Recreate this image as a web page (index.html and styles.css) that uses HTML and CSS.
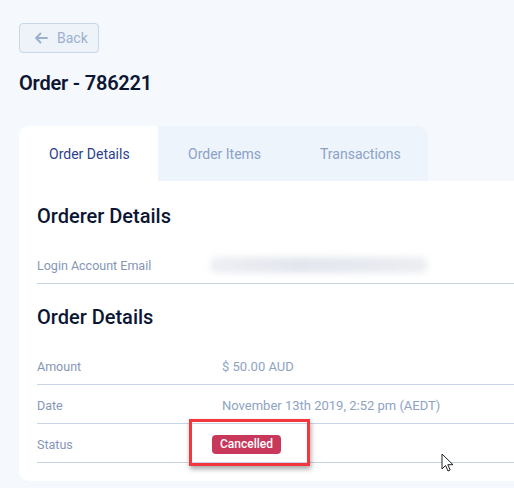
FILE: index.html
```html
<!DOCTYPE html>
<html>
<head>
<meta charset="utf-8">
<link rel="stylesheet" href="styles.css">
</head>
<body>
<div class="page">
  <button class="back-btn">
    <svg class="back-arrow" width="14" height="12" viewBox="0 0 14 12"><path d="M13 6H2M6.5 1.5L2 6l4.5 4.5" fill="none" stroke="currentColor" stroke-width="1.8" stroke-linecap="round" stroke-linejoin="round"/></svg>
    <span>Back</span>
  </button>
  <h1 class="title">Order - 786221</h1>
  <div class="card">
    <div class="tabs">
      <div class="tab active">Order Details</div>
      <div class="tab-group">
        <div class="tab">Order Items</div>
        <div class="tab">Transactions</div>
      </div>
    </div>
    <div class="card-body">
      <h2 class="section-title">Orderer Details</h2>
      <div class="row">
        <div class="label">Login Account Email</div>
        <div class="value"><div class="blur"></div></div>
      </div>
      <h2 class="section-title second">Order Details</h2>
      <div class="row">
        <div class="label">Amount</div>
        <div class="value">$ 50.00 AUD</div>
      </div>
      <div class="row">
        <div class="label">Date</div>
        <div class="value">November 13th 2019, 2:52 pm (AEDT)</div>
      </div>
      <div class="row status-row">
        <div class="label">Status</div>
        <div class="value"><span class="badge">Cancelled</span></div>
        <div class="highlight"></div>
        <svg class="cursor" width="14" height="20" viewBox="0 0 14 20"><path d="M1 1v15l3.5-3.5 2.5 5.5 2.2-1-2.4-5.3H12z" fill="#fff" stroke="#222" stroke-width="1" stroke-linejoin="round"/></svg>
      </div>
    </div>
  </div>
</div>
</body>
</html>
```
FILE: styles.css
```css
html, body {
  margin: 0;
  padding: 0;
  background: #f5f8fc;
  overflow: hidden;
}
body {
  font-family: Roboto, "Liberation Sans", sans-serif;
  width: 514px;
  height: 488px;
}
.page {
  padding: 23px 0 0 19px;
}
.back-btn {
  display: flex;
  align-items: center;
  gap: 9px;
  box-sizing: border-box;
  width: 80px;
  height: 30px;
  padding: 0 0 0 14px;
  background: #eef3fa;
  border: 1px solid #c8d6ea;
  border-radius: 4px;
  color: #9cb0cd;
  font-family: inherit;
  font-size: 14px;
}
.back-arrow {
  color: #9cb0cd;
}
.title {
  margin: 18px 0 0;
  font-size: 20px;
  line-height: 24px;
  font-weight: 600;
  color: #0c1633;
  letter-spacing: -0.2px;
}
.card {
  margin-top: 31px;
  width: 495px;
}
.tabs {
  display: flex;
  height: 55px;
}
.tab {
  display: flex;
  align-items: center;
  font-size: 14px;
  color: #8ba2c6;
}
.tab.active {
  width: 139px;
  box-sizing: border-box;
  padding-left: 30px;
  padding-top: 1px;
  background: #fff;
  color: #2c3f8c;
  border-radius: 10px 0 0 0;
}
.tab-group {
  display: flex;
  width: 270px;
  background: #eef4fc;
  border-radius: 0 10px 0 0;
}
.tab-group .tab {
  padding-top: 1px;
}
.tab-group .tab:first-child {
  margin-left: 30px;
  width: 132px;
}
.card-body {
  background: #fff;
  padding: 23px 0 18px 18px;
  border-radius: 0 0 0 10px;
}
.section-title {
  margin: 0 0 17px;
  font-size: 20px;
  line-height: 24px;
  font-weight: 500;
  color: #0c1633;
}
.section-title.second {
  margin-top: 21px;
}
.row {
  display: flex;
  align-items: center;
  height: 36px;
  padding-top: 2px;
  box-sizing: content-box;
  border-bottom: 1px solid #c7d3e6;
  font-size: 12.5px;
  color: #8596b7;
  position: relative;
}
.label {
  width: 185px;
}
.value {
  display: flex;
  align-items: center;
  color: #8ea3c4;
  font-size: 13px;
}
.blur {
  margin-left: -12px;
  width: 218px;
  height: 16px;
  border-radius: 8px;
  background: linear-gradient(90deg, #edeff4, #e3e6ed 40%, #e6e9ef 70%, #eceef2);
  filter: blur(3px);
}
.badge {
  margin-left: -10px;
  background: #c8385b;
  color: #fff;
  font-size: 12px;
  font-weight: 500;
  line-height: 19px;
  padding: 0 8px;
  border-radius: 4px;
}
.highlight {
  position: absolute;
  left: 152px;
  top: -5px;
  width: 115px;
  height: 41px;
  border: 3px solid #f2383c;
  box-shadow: 1px 3px 5px rgba(0, 0, 0, 0.35);
}
.cursor {
  position: absolute;
  left: 404px;
  top: 29px;
}
```
